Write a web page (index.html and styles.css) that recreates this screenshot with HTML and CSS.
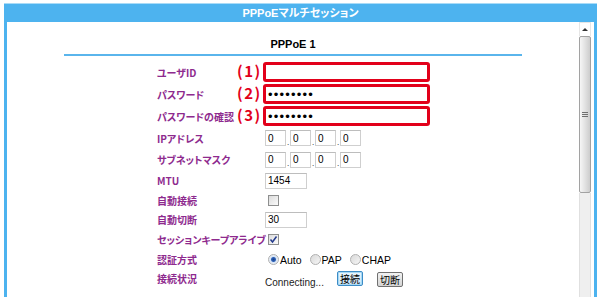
FILE: index.html
```html
<!DOCTYPE html>
<html lang="ja">
    <head>
        <meta charset="UTF-8">
        <title>PPPoEマルチセッション</title>
        <link rel="stylesheet" href="styles.css">
    </head>
    <body>
        <div class="frame">
            <div class="frame_title">PPPoEマルチセッション</div>
            <div class="frame_body">
                <div class="content">
                    <h2 class="section_title">PPPoE 1</h2>
                    <form action="#" class="pppoe_form">
                        <div class="row row_tall">
                            <label class="row_label" for="user_id">ユーザID</label>
                            <div class="row_field">
                                <span class="mark">(1)</span>
                                <input type="text" id="user_id" class="txt_marked">
                            </div>
                        </div>
                        <div class="row row_tall">
                            <label class="row_label" for="password">パスワード</label>
                            <div class="row_field">
                                <span class="mark">(2)</span>
                                <input type="password" id="password" class="txt_marked" value="abcdefgh">
                            </div>
                        </div>
                        <div class="row row_tall">
                            <label class="row_label" for="password2">パスワードの確認</label>
                            <div class="row_field">
                                <span class="mark">(3)</span>
                                <input type="password" id="password2" class="txt_marked" value="abcdefgh">
                            </div>
                        </div>
                        <div class="row row_tall">
                            <label class="row_label">IPアドレス</label>
                            <div class="row_field">
                                <input type="text" class="txt_ip" value="0"><span class="ip_dot">.</span><input type="text" class="txt_ip" value="0"><span class="ip_dot">.</span><input type="text" class="txt_ip" value="0"><span class="ip_dot">.</span><input type="text" class="txt_ip" value="0">
                            </div>
                        </div>
                        <div class="row">
                            <label class="row_label">サブネットマスク</label>
                            <div class="row_field">
                                <input type="text" class="txt_ip" value="0"><span class="ip_dot">.</span><input type="text" class="txt_ip" value="0"><span class="ip_dot">.</span><input type="text" class="txt_ip" value="0"><span class="ip_dot">.</span><input type="text" class="txt_ip" value="0">
                            </div>
                        </div>
                        <div class="row">
                            <label class="row_label" for="mtu">MTU</label>
                            <div class="row_field"><input type="text" id="mtu" class="txt_short" value="1454"></div>
                        </div>
                        <div class="row row_short">
                            <label class="row_label" for="auto_connect">自動接続</label>
                            <div class="row_field"><input type="checkbox" id="auto_connect" class="chk"></div>
                        </div>
                        <div class="row row_short">
                            <label class="row_label" for="auto_cut">自動切断</label>
                            <div class="row_field"><input type="text" id="auto_cut" class="txt_short" value="30"></div>
                        </div>
                        <div class="row">
                            <label class="row_label" for="keep_alive">セッションキープアライブ</label>
                            <div class="row_field"><input type="checkbox" id="keep_alive" class="chk" checked></div>
                        </div>
                        <div class="row row_short">
                            <label class="row_label">認証方式</label>
                            <div class="row_field">
                                <input type="radio" name="auth" class="rdo" checked><span class="rdo_text">Auto</span>
                                <input type="radio" name="auth" class="rdo"><span class="rdo_text">PAP</span>
                                <input type="radio" name="auth" class="rdo"><span class="rdo_text">CHAP</span>
                            </div>
                        </div>
                        <div class="row row_short">
                            <label class="row_label">接続状況</label>
                            <div class="row_field">
                                <span class="status">Connecting...</span>
                                <button type="button" class="btn btn_focus">接続</button>
                                <button type="button" class="btn btn_low">切断</button>
                            </div>
                        </div>
                    </form>
                </div>
                <div class="scrollbar">
                    <div class="scroll_up"><span class="arrow"></span></div>
                    <div class="scroll_thumb"><span class="grip"></span></div>
                    <div class="scroll_track"></div>
                </div>
            </div>
        </div>
    </body>
</html>
```

FILE: styles.css
```css
* {
    margin: 0;
    padding: 0;
    box-sizing: border-box;
}

html, body {
    height: 297px;
    overflow: hidden;
    background-color: white;
}

body {
    font-family: "Liberation Sans", "Noto Sans CJK JP", sans-serif;
    font-size: 10px;
    color: #000;
}

.frame {
    display: flex;
    flex-direction: column;
    margin: 3px 3px 0 4px;
    height: 294px;
    border-top: 1px solid #a9dbf7;
    background-color: #4db3ef;
    padding: 0 3px;
}

.frame_title {
    height: 18px;
    line-height: 18px;
    text-align: center;
    color: white;
    font-size: 11px;
    font-weight: bold;
    font-feature-settings: "palt";
}

.frame_body {
    flex: 1;
    display: flex;
    overflow: hidden;
    background-color: white;
}

.content {
    flex: 1;
}

.section_title {
    width: 80%;
    margin: 0 auto;
    padding: 14px 0 2px;
    line-height: 16px;
    text-align: center;
    font-size: 11px;
    border-bottom: 2px solid #5ab5ec;
}

.pppoe_form {
    margin-top: 5px;
    padding-left: 150px;
}

.row {
    display: grid;
    grid-template-columns: 108px 1fr;
    align-items: center;
    height: 21px;
}

.row_tall {
    height: 22px;
}

.row_short {
    height: 19px;
}

.row_label {
    color: #8e2a8e;
    font-family: "Noto Sans CJK JP", sans-serif;
    font-weight: bold;
    font-size: 10px;
    font-feature-settings: "palt";
    white-space: nowrap;
}

.row_field {
    position: relative;
    display: flex;
    align-items: center;
}

/* 注記の番号 */
.mark {
    position: absolute;
    left: -28px;
    top: -1px;
    color: #e2001a;
    font-family: "Noto Sans CJK JP", sans-serif;
    font-weight: bold;
    font-size: 15px;
    line-height: 20px;
    letter-spacing: 1.5px;
}

input {
    font-family: "Liberation Sans", sans-serif;
    font-size: 10px;
    color: #000;
    outline: none;
}

.txt_marked {
    width: 167px;
    height: 20px;
    margin-left: -2px;
    border: 3px solid #e2001a;
    border-radius: 3px;
    padding-left: 2px;
    font-size: 13px;
    letter-spacing: 1.2px;
}

.txt_ip {
    width: 21px;
    height: 16px;
    border: 1px solid #cfcfcf;
    border-top-color: #bdbdbd;
    padding-left: 2px;
}

.ip_dot {
    width: 4px;
    padding-top: 8px;
    font-size: 8px;
    text-align: center;
}

.txt_short {
    width: 42px;
    height: 16px;
    border: 1px solid #cfcfcf;
    border-top-color: #bdbdbd;
    padding-left: 2px;
}

.chk {
    appearance: none;
    width: 11px;
    height: 11px;
    margin-left: 3px;
    border: 1px solid #8e8f8f;
    background: linear-gradient(135deg, #dcdcdc, #fbfbfb);
}

.chk:checked {
    background: url("data:image/svg+xml,%3Csvg xmlns='http://www.w3.org/2000/svg' viewBox='0 0 9 9'%3E%3Cpath d='M1.5 4.5 L3.5 7 L7.5 1.5' fill='none' stroke='%23233a8c' stroke-width='1.5'/%3E%3C/svg%3E") no-repeat center / 9px 9px, linear-gradient(135deg, #dcdcdc, #fbfbfb);
}

.rdo {
    appearance: none;
    width: 11px;
    height: 11px;
    margin-left: 3px;
    border: 1px solid #b0b0b0;
    border-radius: 50%;
    background: linear-gradient(135deg, #d9d9d9, #f6f6f6);
}

.rdo:checked {
    background: radial-gradient(circle, #1a3f88 0, #2e62b8 2px, #d8e4f4 3px, #eef2f7 5px);
}

.rdo_text {
    margin-left: 1px;
    margin-right: 5px;
    font-size: 10.5px;
}

.rdo_text:last-child {
    margin-right: 0;
}

.status {
    margin-top: 8px;
    margin-right: 13px;
    font-size: 10px;
    color: #222;
}

.btn {
    width: 26px;
    height: 15px;
    font-family: "Noto Sans CJK JP", sans-serif;
    font-size: 10px;
    line-height: 12px;
    border-radius: 2px;
    color: #000;
}

.btn_focus {
    border: 1px solid #3c8cc6;
    background: linear-gradient(#eaf6fd, #c9e5f7);
    box-shadow: inset 0 0 0 1px #a6d8f5;
}

.btn_low {
    margin-left: 14px;
    margin-top: 2px;
    border: 1px solid #707070;
    background: linear-gradient(#f2f2f2, #d4d4d4);
}

/* 擬似スクロールバー */
.scrollbar {
    width: 12px;
    margin-right: 3px;
    display: flex;
    flex-direction: column;
}

.scroll_up {
    height: 14px;
    display: flex;
    justify-content: center;
    align-items: center;
    border: 1px solid #e6e6e6;
    border-bottom: none;
}

.arrow {
    width: 0;
    height: 0;
    border-left: 3px solid transparent;
    border-right: 3px solid transparent;
    border-bottom: 3px solid #333;
}

.scroll_thumb {
    height: 157px;
    display: flex;
    justify-content: center;
    align-items: center;
    border: 1px solid #a2a2a2;
    border-radius: 2px;
    background: linear-gradient(to right, #f6f6f6, #e2e2e2 50%, #cdcdcd);
}

.grip {
    width: 6px;
    height: 6px;
    background: repeating-linear-gradient(#6f6f6f 0 1px, transparent 1px 2px);
}

.scroll_track {
    flex: 1;
    background-color: #efefef;
    border-left: 1px solid #e0e0e0;
    border-right: 1px solid #e0e0e0;
}
```
